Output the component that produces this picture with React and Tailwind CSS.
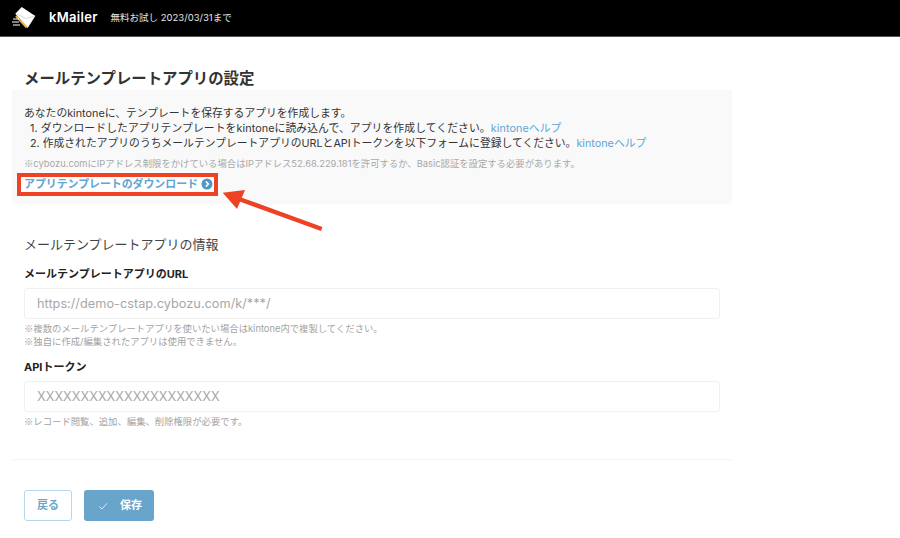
const font = { fontFamily: '"Inter", "Noto Sans CJK JP", sans-serif' };

function Logo() {
  return (
    <svg width="26" height="24" viewBox="0 0 26 24" className="shrink-0">
      <path d="M10.7 1 L24.3 10 L16.7 22 L4.3 7.7 Z" fill="#fff" />
      <path d="M5.5 8 L15 12.5 L24 10" fill="none" stroke="#c9c9c9" strokeWidth="0.7" />
      <path d="M5 10 L15.7 21.5" stroke="#e3b93f" strokeWidth="2" />
      <path d="M2 13h6M1 16h7M2 19h7" stroke="#fff" strokeWidth="1.2" />
    </svg>
  );
}

function Help() {
  return <a className="text-[#5ea5d3]">kintoneヘルプ</a>;
}

// ※ falls back to an odd glyph in Inter, so it gets the CJK family
function Mark() {
  return <span className="font-['Noto_Sans_CJK_JP']">※</span>;
}

function Field({ label, placeholder, notes }) {
  return (
    <div>
      <div className="text-[11px] leading-[16px] font-bold text-[#222]">{label}</div>
      <input
        readOnly
        placeholder={placeholder}
        className="mt-[6px] block w-[696px] h-[31px] px-[12px] border border-[#f0f0f0] rounded-[3px] bg-white text-[12.75px] placeholder:text-[#a8a8a8] outline-none"
      />
      <div className="mt-[3px] text-[9.35px] leading-[13px] text-[#a3a3a3]">
        {notes.map((n) => (
          <div key={n}>
            <Mark />
            {n}
          </div>
        ))}
      </div>
    </div>
  );
}

export default function App() {
  return (
    <div className="relative w-[900px] h-[538px] overflow-hidden bg-white" style={font}>
      {/* Header */}
      <header className="h-[37px] bg-black flex items-center pl-[11px] border-b border-[#555]">
        <Logo />
        <span className="ml-[12px] text-[13px] font-semibold tracking-[0.3px] text-white">kMailer</span>
        <span className="ml-[13px] text-[9.5px] text-[#e4e4e4]">無料お試し 2023/03/31まで</span>
      </header>

      <main className="pl-[12px] w-[732px]">
        <h1 className="pl-[12px] pt-[31px] text-[15.4px] leading-[21px] font-bold text-[#333]">
          メールテンプレートアプリの設定
        </h1>

        {/* Info box */}
        <section className="mt-[1px] h-[114px] bg-[#f9f9f9] rounded-[3px] pt-[16px] pl-[12px]">
          <p className="text-[10.8px] leading-[15px] text-[#333]">
            あなたのkintoneに、テンプレートを保存するアプリを作成します。
          </p>
          <ol className="text-[10.8px] leading-[15px] text-[#333] pl-[6px]">
            <li className="tracking-[0.09px]">
              1. ダウンロードしたアプリテンプレートをkintoneに読み込んで、アプリを作成してください。<Help />
            </li>
            <li>
              2. 作成されたアプリのうちメールテンプレートアプリのURLとAPIトークンを以下フォームに登録してください。<Help />
            </li>
          </ol>
          <p className="mt-[6px] text-[9.35px] leading-[13px] text-[#a8a8a8]">
            <Mark />
            cybozu.comにIPアドレス制限をかけている場合はIPアドレス52.68.229.181を許可するか、Basic認証を設定する必要があります。
          </p>
          <a className="-ml-[7px] inline-flex items-center h-[23px] w-[201px] pl-[3px] border-[4px] border-[#ee4224] bg-white text-[10.9px] font-bold text-[#5ea5d3]">
            アプリテンプレートのダウンロード
            <svg width="12" height="12" viewBox="0 0 12 12" className="ml-[3px]">
              <circle cx="6" cy="6" r="5.5" fill="#4f97c7" />
              <path d="M4.8 3.4 L7.4 6 L4.8 8.6" fill="none" stroke="#fff" strokeWidth="1.5" />
            </svg>
          </a>
        </section>

        {/* Form */}
        <section className="pl-[12px]">
          <h2 className="mt-[31px] text-[13px] leading-[18px] text-[#444]">メールテンプレートアプリの情報</h2>
          <div className="mt-[13px] flex flex-col gap-[11px]">
            <Field
              label="メールテンプレートアプリのURL"
              placeholder="https://demo-cstap.cybozu.com/k/***/"
              notes={[
                '複数のメールテンプレートアプリを使いたい場合はkintone内で複製してください。',
                '独自に作成/編集されたアプリは使用できません。',
              ]}
            />
            <Field
              label="APIトークン"
              placeholder="XXXXXXXXXXXXXXXXXXXXX"
              notes={['レコード閲覧、追加、編集、削除権限が必要です。']}
            />
          </div>
        </section>

        <hr className="mt-[31px] border-[#f5f5f5]" />

        {/* Actions */}
        <div className="mt-[30px] pl-[12px] flex gap-[12px]">
          <button className="w-[48px] h-[31px] rounded-[3px] border border-[#b8d6ea] bg-white text-[11px] font-bold text-[#6ba5cc]">
            戻る
          </button>
          <button className="w-[70px] h-[31px] rounded-[3px] bg-[#69a4cb] text-[11px] font-bold text-white flex items-center pl-[14px]">
            <svg width="10" height="10" viewBox="0 0 10 10">
              <path d="M1.2 5.4 L4 8 L8.8 2.4" fill="none" stroke="#dcebf5" strokeWidth="1" />
            </svg>
            <span className="ml-[12px]">保存</span>
          </button>
        </div>
      </main>

      {/* Annotation arrow */}
      <svg width="110" height="50" viewBox="0 0 110 50" className="absolute left-[220px] top-[186px]">
        <path d="M19 13 L101.7 43" stroke="#ee4224" strokeWidth="4.4" />
        <path d="M2.7 6.7 L25 4 L17 23 Z" fill="#ee4224" />
      </svg>
    </div>
  );
}
